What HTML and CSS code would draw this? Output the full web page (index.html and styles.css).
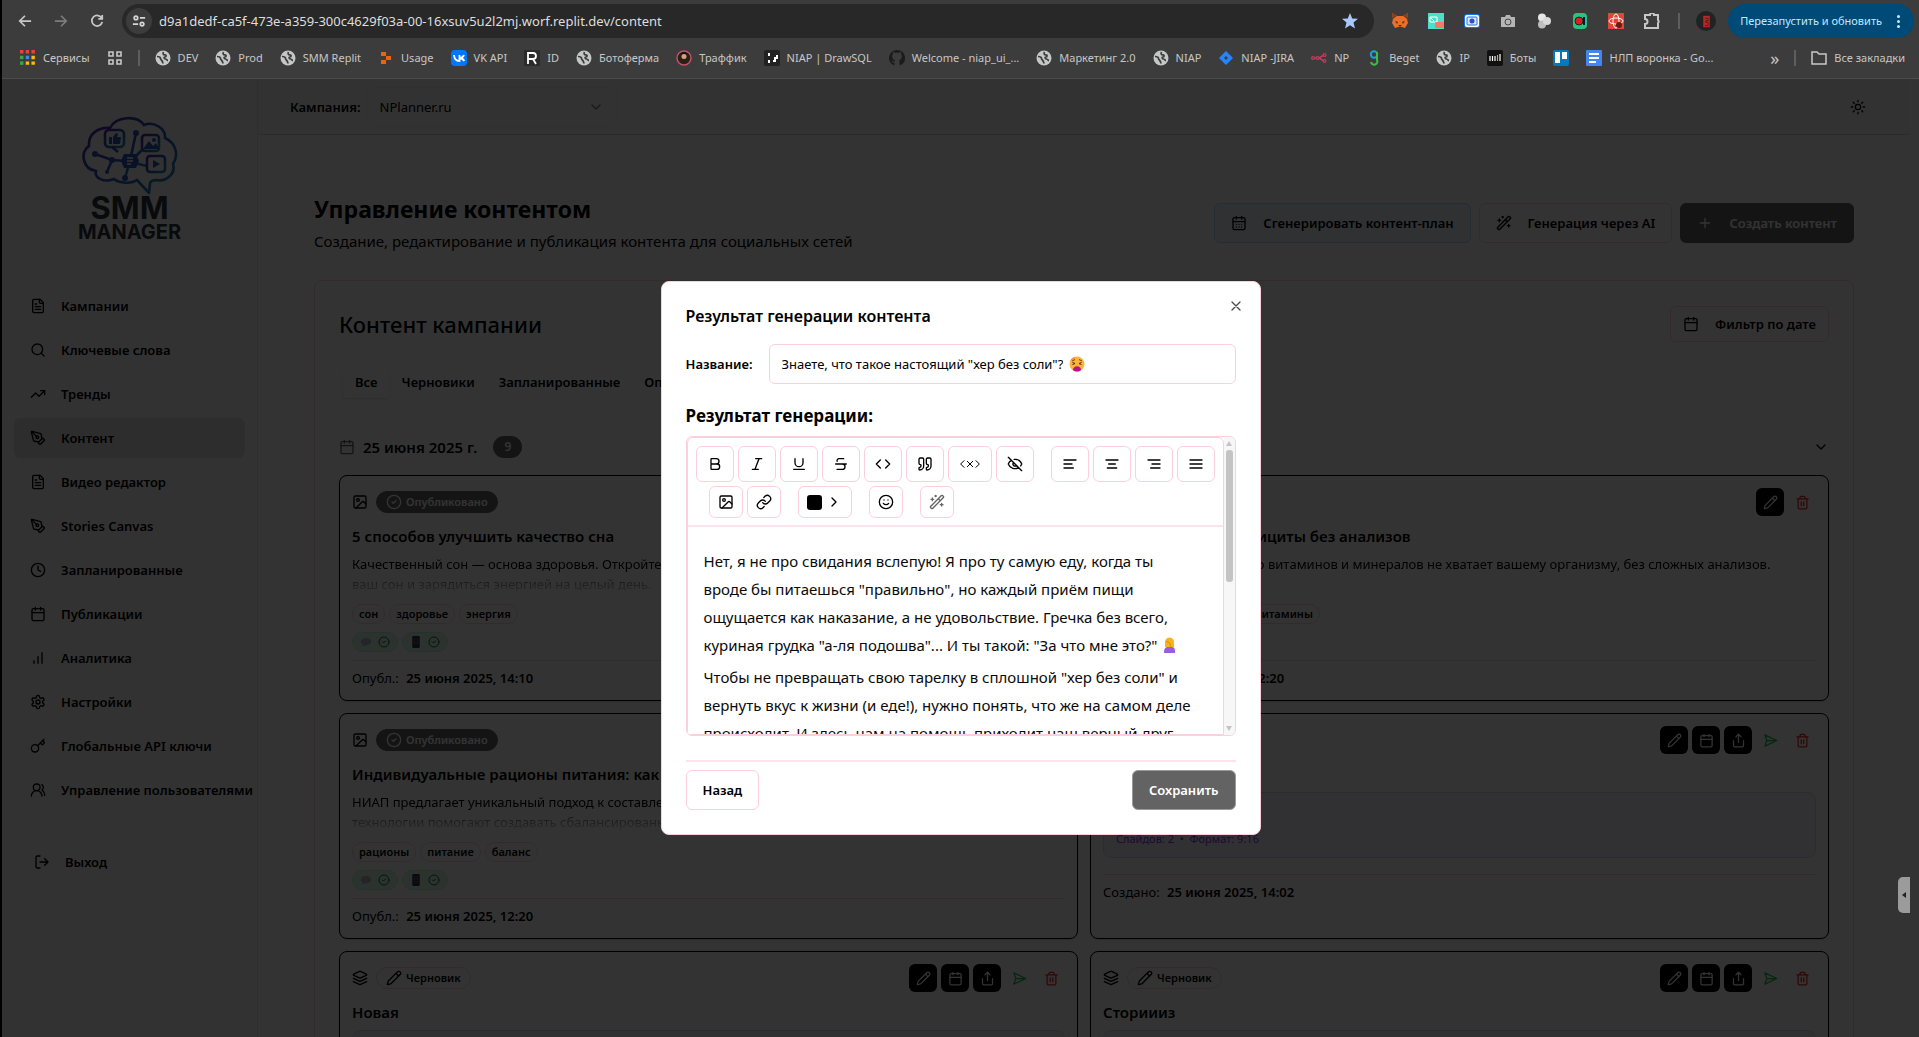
FILE: index.html
```html
<!DOCTYPE html>
<html lang="ru">
<head>
<meta charset="utf-8">
<title>Управление контентом</title>
<link rel="stylesheet" href="styles.css">
</head>
<body>
<svg class="defs" aria-hidden="true">
  <defs>
    <linearGradient id="brain" x1="0" y1="0" x2="1" y2="1">
      <stop offset="0" stop-color="#5a1fa8"/><stop offset=".5" stop-color="#2b55b8"/><stop offset="1" stop-color="#1793b5"/>
    </linearGradient>
  </defs>
  <symbol id="i-file" viewBox="0 0 24 24"><path d="M15 2H6a2 2 0 0 0-2 2v16a2 2 0 0 0 2 2h12a2 2 0 0 0 2-2V7Z"/><path d="M14 2v4a2 2 0 0 0 2 2h4M10 9H8M16 13H8M16 17H8"/></symbol>
  <symbol id="i-search" viewBox="0 0 24 24"><circle cx="11" cy="11" r="8"/><path d="m21 21-4.3-4.3"/></symbol>
  <symbol id="i-trend" viewBox="0 0 24 24"><path d="m22 7-8.500 8.500-5-5L2 17"/><path d="M16 7h6v6"/></symbol>
  <symbol id="i-pen" viewBox="0 0 24 24"><path d="M15.707 21.293a1 1 0 0 1-1.414 0l-1.586-1.586a1 1 0 0 1 0-1.414l5.586-5.586a1 1 0 0 1 1.414 0l1.586 1.586a1 1 0 0 1 0 1.414z"/><path d="m18 13-1.375-6.874a1 1 0 0 0-.746-.776L3.235 2.028a1 1 0 0 0-1.207 1.207L5.350 15.879a1 1 0 0 0 .776.746L13 18"/><path d="m2.300 2.300 7.286 7.286"/><circle cx="11" cy="11" r="2"/></symbol>
  <symbol id="i-clock" viewBox="0 0 24 24"><circle cx="12" cy="12" r="10"/><path d="M12 6v6l4 2"/></symbol>
  <symbol id="i-cal" viewBox="0 0 24 24"><path d="M8 2v4M16 2v4M3 10h18"/><rect x="3" y="4" width="18" height="18" rx="2"/></symbol>
  <symbol id="i-caldays" viewBox="0 0 24 24"><path d="M8 2v4M16 2v4M3 10h18M8 14h.01M12 14h.01M16 14h.01M8 18h.01M12 18h.01M16 18h.01"/><rect x="3" y="4" width="18" height="18" rx="2"/></symbol>
  <symbol id="i-bars" viewBox="0 0 24 24"><path d="M12 20V10M18 20V4M6 20v-4"/></symbol>
  <symbol id="i-gear" viewBox="0 0 24 24"><path d="M12.220 2h-.44a2 2 0 0 0-2 2v.18a2 2 0 0 1-1 1.730l-.43.25a2 2 0 0 1-2 0l-.15-.08a2 2 0 0 0-2.730.73l-.22.38a2 2 0 0 0 .73 2.730l.15.1a2 2 0 0 1 1 1.720v.51a2 2 0 0 1-1 1.740l-.15.09a2 2 0 0 0-.73 2.730l.22.38a2 2 0 0 0 2.730.73l.15-.08a2 2 0 0 1 2 0l.43.25a2 2 0 0 1 1 1.730V20a2 2 0 0 0 2 2h.44a2 2 0 0 0 2-2v-.18a2 2 0 0 1 1-1.730l.43-.25a2 2 0 0 1 2 0l.15.08a2 2 0 0 0 2.730-.73l.22-.39a2 2 0 0 0-.73-2.730l-.15-.08a2 2 0 0 1-1-1.740v-.5a2 2 0 0 1 1-1.740l.15-.09a2 2 0 0 0 .73-2.730l-.22-.38a2 2 0 0 0-2.730-.73l-.15.08a2 2 0 0 1-2 0l-.43-.25a2 2 0 0 1-1-1.730V4a2 2 0 0 0-2-2z"/><circle cx="12" cy="12" r="3"/></symbol>
  <symbol id="i-key" viewBox="0 0 24 24"><path d="m15.500 7.500 2.300 2.300a1 1 0 0 0 1.400 0l2.100-2.100a1 1 0 0 0 0-1.400L19 4M21 2l-9.600 9.600"/><circle cx="7.500" cy="15.500" r="5.500"/></symbol>
  <symbol id="i-users" viewBox="0 0 24 24"><path d="M18 21a8 8 0 0 0-16 0"/><circle cx="10" cy="8" r="5"/><path d="M22 20c0-3.370-2-6.500-4-8a5 5 0 0 0-.45-8.300"/></symbol>
  <symbol id="i-out" viewBox="0 0 24 24"><path d="M9 21H5a2 2 0 0 1-2-2V5a2 2 0 0 1 2-2h4M16 17l5-5-5-5M21 12H9"/></symbol>
  <symbol id="i-down" viewBox="0 0 24 24"><path d="m6 9 6 6 6-6"/></symbol>
  <symbol id="i-right" viewBox="0 0 24 24"><path d="m9 18 6-6-6-6"/></symbol>
  <symbol id="i-sun" viewBox="0 0 24 24"><circle cx="12" cy="12" r="4"/><path d="M12 2v2M12 20v2M4.930 4.930l1.410 1.410M17.660 17.660l1.410 1.410M2 12h2M20 12h2M6.340 17.660l-1.410 1.410M19.070 4.930l-1.410 1.410"/></symbol>
  <symbol id="i-wand" viewBox="0 0 24 24"><path d="m21.640 3.640-1.280-1.280a1.210 1.210 0 0 0-1.720 0L2.360 18.640a1.210 1.210 0 0 0 0 1.720l1.280 1.280a1.200 1.200 0 0 0 1.720 0L21.640 5.360a1.200 1.200 0 0 0 0-1.720M14 7l3 3M5 6v4M19 14v4M10 2v2M7 8H3M21 16h-4M11 3H9"/></symbol>
  <symbol id="i-plus" viewBox="0 0 24 24"><path d="M5 12h14M12 5v14"/></symbol>
  <symbol id="i-image" viewBox="0 0 24 24"><rect x="3" y="3" width="18" height="18" rx="2"/><circle cx="9" cy="9" r="2"/><path d="m21 15-3.086-3.086a2 2 0 0 0-2.828 0L6 21"/></symbol>
  <symbol id="i-check" viewBox="0 0 24 24"><circle cx="12" cy="12" r="10"/><path d="m9 12 2 2 4-4"/></symbol>
  <symbol id="i-pencil" viewBox="0 0 24 24"><path d="M21.174 6.812a1 1 0 0 0-3.986-3.987L3.842 16.174a2 2 0 0 0-.5.83l-1.321 4.352a.5.5 0 0 0 .623.622l4.353-1.320a2 2 0 0 0 .83-.497zM15 5l4 4"/></symbol>
  <symbol id="i-share" viewBox="0 0 24 24"><path d="M4 12v8a2 2 0 0 0 2 2h12a2 2 0 0 0 2-2v-8M16 6l-4-4-4 4M12 2v13"/></symbol>
  <symbol id="i-send" viewBox="0 0 24 24"><path d="m3 3 3 9-3 9 19-9ZM6 12h16"/></symbol>
  <symbol id="i-trash" viewBox="0 0 24 24"><path d="M3 6h18M19 6v14c0 1-1 2-2 2H7c-1 0-2-1-2-2V6M8 6V4c0-1 1-2 2-2h4c1 0 2 1 2 2v2M10 11v6M14 11v6"/></symbol>
  <symbol id="i-layers" viewBox="0 0 24 24"><path d="m12.830 2.180a2 2 0 0 0-1.660 0L2.600 6.080a1 1 0 0 0 0 1.830l8.580 3.910a2 2 0 0 0 1.660 0l8.580-3.900a1 1 0 0 0 0-1.830Z"/><path d="m22 12.500-9.170 4.160a2 2 0 0 1-1.660 0L2 12.500M22 17.500l-9.170 4.160a2 2 0 0 1-1.660 0L2 17.500"/></symbol>
  <symbol id="i-x" viewBox="0 0 24 24"><path d="M18 6 6 18M6 6l12 12"/></symbol>
  <symbol id="i-bold" viewBox="0 0 24 24"><path d="M6 12h9a4 4 0 0 1 0 8H7a1 1 0 0 1-1-1V5a1 1 0 0 1 1-1h7a4 4 0 0 1 0 8"/></symbol>
  <symbol id="i-italic" viewBox="0 0 24 24"><path d="M19 4h-9M14 20H5M15 4 9 20"/></symbol>
  <symbol id="i-under" viewBox="0 0 24 24"><path d="M6 4v6a6 6 0 0 0 12 0V4M4 20h16"/></symbol>
  <symbol id="i-strike" viewBox="0 0 24 24"><path d="M16 4H9a3 3 0 0 0-2.830 4M14 12a4 4 0 0 1 0 8H6M4 12h16"/></symbol>
  <symbol id="i-code" viewBox="0 0 24 24"><path d="m16 18 6-6-6-6M8 6l-6 6 6 6"/></symbol>
  <symbol id="i-quote" viewBox="0 0 24 24"><path d="M16 3a2 2 0 0 0-2 2v6a2 2 0 0 0 2 2 1 1 0 0 1 1 1v1a2 2 0 0 1-2 2 1 1 0 0 0-1 1v2a1 1 0 0 0 1 1 6 6 0 0 0 6-6V5a2 2 0 0 0-2-2zM5 3a2 2 0 0 0-2 2v6a2 2 0 0 0 2 2 1 1 0 0 1 1 1v1a2 2 0 0 1-2 2 1 1 0 0 0-1 1v2a1 1 0 0 0 1 1 6 6 0 0 0 6-6V5a2 2 0 0 0-2-2z"/></symbol>
  <symbol id="i-tagx" viewBox="0 0 32 24"><path d="m7 7-5 5 5 5M25 7l5 5-5 5M12 8l8 8M20 8l-8 8"/></symbol>
  <symbol id="i-eyeoff" viewBox="0 0 24 24"><path d="M10.733 5.076a10.744 10.744 0 0 1 11.205 6.575 1 1 0 0 1 0 .696 10.747 10.747 0 0 1-1.444 2.490M14.084 14.158a3 3 0 0 1-4.242-4.242M17.479 17.499a10.750 10.750 0 0 1-15.417-5.151 1 1 0 0 1 0-.696 10.750 10.750 0 0 1 4.446-5.143M2 2l20 20"/></symbol>
  <symbol id="i-al" viewBox="0 0 24 24"><path d="M15 12H3M17 18H3M21 6H3"/></symbol>
  <symbol id="i-ac" viewBox="0 0 24 24"><path d="M17 12H7M19 18H5M21 6H3"/></symbol>
  <symbol id="i-ar" viewBox="0 0 24 24"><path d="M21 12H9M21 18H7M21 6H3"/></symbol>
  <symbol id="i-aj" viewBox="0 0 24 24"><path d="M3 12h18M3 18h18M3 6h18"/></symbol>
  <symbol id="i-link" viewBox="0 0 24 24"><path d="M10 13a5 5 0 0 0 7.540.54l3-3a5 5 0 0 0-7.070-7.070l-1.720 1.710"/><path d="M14 11a5 5 0 0 0-7.540-.54l-3 3a5 5 0 0 0 7.070 7.070l1.710-1.710"/></symbol>
  <symbol id="i-smile" viewBox="0 0 24 24"><circle cx="12" cy="12" r="10"/><path d="M8 14s1.500 2 4 2 4-2 4-2M9 9h.01M15 9h.01"/></symbol>
  <symbol id="i-globe" viewBox="0 0 16 16"><circle cx="8" cy="8" r="7.500" fill="#c4c7c5" stroke="none"/><path d="M2 6.500c2 0 3.500.5 3.500 2S7.500 10 8 13.500M8.500 2c-1 2 0 3 1.500 2.800 1.500 0 1.500 2 0 2.200-1.500.2-1 1.500.5 2 1.500.3 1.500 1.500 2.500 1.500" stroke="#3c3c3c" stroke-width="1.700"/></symbol>
  <symbol id="e-bubble" viewBox="0 0 16 16"><ellipse cx="8" cy="7.500" rx="7" ry="5" fill="#b9b6c6" stroke="none"/><path d="M4 11l-1.500 3L8 12z" fill="#b9b6c6" stroke="none"/></symbol>
  <symbol id="e-phone" viewBox="0 0 16 16"><rect x="3" y="0" width="10" height="16" rx="1.500" fill="#3a3350" stroke="none"/><path d="M5 4h2M5 10h2M9 7h2" stroke="#5aa0ff"/><path d="M9 4h2M5 7h2M9 10h2" stroke="#ff7a4a"/></symbol>
</svg>

<header class="chrome">
  <div class="bar">
    <button class="tool" aria-label="Назад"><svg viewBox="0 0 16 16"><path d="M15 8H2M8 2 2 8l6 6"/></svg></button>
    <button class="tool dim" aria-label="Вперёд"><svg viewBox="0 0 16 16"><path d="M1 8h13M8 2l6 6-6 6"/></svg></button>
    <button class="tool" aria-label="Обновить"><svg viewBox="0 0 16 16"><path d="M13.500 5A6 6 0 1 0 14 9M14 1v4.500H9.500"/></svg></button>
    <div class="omni">
      <span class="site"><svg viewBox="0 0 16 16"><circle cx="4.500" cy="4.500" r="2"/><path d="M9 4.500h6M1 11.500h6"/><circle cx="11.500" cy="11.500" r="2"/></svg></span>
      <input class="url" aria-label="Адрес" value="d9a1dedf-ca5f-473e-a359-300c4629f03a-00-16xsuv5u2l2mj.worf.replit.dev/content">
      <svg class="star" viewBox="0 0 16 16"><path d="m8 0 2.200 5.400 5.800.4-4.500 3.700L13 15.400 8 12.200l-5 3.200 1.500-5.900L0 5.800l5.800-.4z"/></svg>
    </div>
    <div class="exts">
      <svg viewBox="0 0 16 16"><path d="M0 0l5 3h6l5-3-1 6 1 4-3 5-3-1H6l-3 1-3-5 1-4z" fill="#e8702a"/><path d="M5 3L1 6 0 0zM11 3l4 3 1-6z" fill="#8a3a18"/><path d="M3 8l3 1-1 2zM13 8l-3 1 1 2zM6 12h4l-2 2z" fill="#5b2a12"/></svg>
      <svg viewBox="0 0 16 16"><path d="M0 0h16v16H0z" fill="#4ce0c8"/><path d="M2 4h7v5H2zM3 5l3 3" fill="none" stroke="#fff"/><rect x="7" y="9" width="9" height="6" rx="1" fill="#f87860"/></svg>
      <svg viewBox="0 0 16 16"><rect y="1" width="16" height="14" rx="3" fill="#1a73e8"/><rect x="1" y="2" width="14" height="12" rx="2" fill="#fff"/><rect x="3" y="4" width="10" height="8" rx="1" fill="#dbe7ff" stroke="#1a73e8"/><circle cx="8" cy="8" r="2.500" fill="#3949c6"/></svg>
      <svg viewBox="0 0 16 16"><path d="M1 4h4l1-2h4l1 2h4v10H1z" fill="#b5b5b5"/><circle cx="8" cy="9" r="3" fill="#b5b5b5" stroke="#444"/></svg>
      <svg viewBox="0 0 16 16"><circle cx="6" cy="4.500" r="4" fill="#e8e8e8"/><circle cx="6" cy="11.500" r="4" fill="#bdbdbd"/><circle cx="11" cy="8" r="4" fill="#d8d8d8"/></svg>
      <svg viewBox="0 0 16 16"><rect x="1" width="14" height="16" rx="4" fill="#27c47e"/><circle cx="7" cy="8" r="4" fill="#e02020" stroke="#222"/><path d="M12 4v8" stroke="#114" stroke-width="2"/></svg>
      <svg viewBox="0 0 16 16"><path d="M0 0h16v16H0z" fill="#e0463a"/><ellipse cx="8" cy="8" rx="7" ry="3" fill="none" stroke="#fff"/><ellipse cx="8" cy="8" rx="3" ry="7" fill="none" stroke="#fff"/><circle cx="11" cy="12" r="3" fill="#6b1c12"/></svg>
      <svg viewBox="0 0 16 16"><path d="M1 2h5a2 2 0 0 1 4 0h4v5a2 2 0 0 1 0 3v5H1v-4a2 2 0 0 0 0-5z" fill="none" stroke="#c7c7c7" stroke-width="2"/></svg>
    </div>
    <span class="sep"></span>
    <span class="avatar"><svg viewBox="0 0 16 16"><path d="M4 1h8v14H4z" fill="#c0242c"/><path d="M6 4h4v3H7v2h3v4H6" stroke="#420" fill="none"/></svg></span>
    <button class="update">Перезапустить и обновить <span class="dots"></span></button>
  </div>
  <nav class="marks">
    <a href="#"><svg viewBox="0 0 14 14"><path d="M0 0h3v3H0zM5 0h3v3H5zM10 0h3v3h-3z" fill="#ea4335"/><path d="M0 5h3v3H0z" fill="#34a853"/><path d="M5 5h3v3H5z" fill="#4285f4"/><path d="M10 5h3v3h-3zM10 10h3v3h-3zM5 10h3v3H5z" fill="#fbbc04"/><path d="M0 10h3v3H0z" fill="#34a853"/></svg>Сервисы</a>
    <a href="#" aria-label="Вкладки"><svg viewBox="0 0 16 16"><path d="M2 2h4v4H2zM10 2h4v4h-4zM2 10h4v4H2zM10 10h4v4h-4z" fill="none" stroke="#c7c7c7" stroke-width="1.600"/></svg></a>
    <span class="sep"></span>
    <a href="#"><svg><use href="#i-globe"/></svg>DEV</a>
    <a href="#"><svg><use href="#i-globe"/></svg>Prod</a>
    <a href="#"><svg><use href="#i-globe"/></svg>SMM Replit</a>
    <a href="#"><svg viewBox="0 0 16 16"><path d="M3 2h5v4H3zM8 6h5v4H8zM3 10h5v4H3z" fill="#f26207"/></svg>Usage</a>
    <a href="#"><svg viewBox="0 0 16 16"><rect width="16" height="16" rx="4" fill="#07f"/><path d="M3 5c.2 4 2 6 5.500 6V5M13 5c-.5 1.500-2 3-4.500 3 2.500 0 4 1.500 4.800 3" fill="none" stroke="#fff" stroke-width="1.800"/></svg>VK API</a>
    <a href="#"><svg viewBox="0 0 16 16"><path d="M0 0h16v16H0z" fill="#2b2b2b"/><path d="M4 14V3h5a3 3 0 0 1 0 6H4M9 9l3 5" fill="none" stroke="#fff" stroke-width="1.800"/></svg>ID</a>
    <a href="#"><svg><use href="#i-globe"/></svg>Ботоферма</a>
    <a href="#"><svg viewBox="0 0 16 16"><circle cx="8" cy="8" r="7" fill="#2a2018" stroke="#c0506a" stroke-width="1.500"/><circle cx="8" cy="6.500" r="2.500" fill="#d6a27c"/><path d="M5 4c1-2 5-2 6 0z" fill="#111"/></svg>Траффик</a>
    <a href="#"><svg viewBox="0 0 16 16"><rect width="16" height="16" rx="2" fill="#222"/><path d="M5 3v3M5 10v3M9 11h2V8h2V5" stroke="#fff" stroke-width="2" fill="none"/></svg>NIAP | DrawSQL</a>
    <a href="#"><svg viewBox="0 0 16 16"><path d="M8 0a8 8 0 0 0-2.500 15.600v-3C3 13 3 11 2 10.500c2-.2 1.500 1.500 3.500 1 0-.6.300-1 .6-1.300C3 9.800 2.500 5 4 4.200L4 2c1 0 2 .8 2 .8h4S11 2 12 2v2.200c1.500 1 1 5.600-2 6 .6.600.6 1.300.6 5.400A8 8 0 0 0 8 0" fill="#1b1b1b"/></svg>Welcome - niap_ui_...</a>
    <a href="#"><svg><use href="#i-globe"/></svg>Маркетинг 2.0</a>
    <a href="#"><svg><use href="#i-globe"/></svg>NIAP</a>
    <a href="#"><svg viewBox="0 0 16 16"><path d="m8 1 7 7-7 7-7-7z" fill="#2684ff"/><path d="m8 6 2 2-2 2-2-2z" fill="#3c3c3c"/></svg>NIAP -JIRA</a>
    <a href="#"><svg viewBox="0 0 16 16"><path d="M2 8h6l5-3M8 8l5 3" fill="none" stroke="#c8385e" stroke-width="1.500"/><g fill="#3c3c3c" stroke="#c8385e" stroke-width="1.200"><circle cx="2" cy="8" r="1.400"/><circle cx="6.500" cy="8" r="1.400"/><circle cx="13.500" cy="5" r="1.400"/><circle cx="13.500" cy="11" r="1.400"/></g></svg>NP</a>
    <a href="#"><svg viewBox="0 0 16 16"><circle cx="8" cy="4.500" r="3.200" fill="none" stroke="#1ba0e0" stroke-width="2"/><path d="M11 2v8a3.200 3.200 0 1 1-6 2" fill="none" stroke="#3bbf45" stroke-width="2"/></svg>Beget</a>
    <a href="#"><svg><use href="#i-globe"/></svg>IP</a>
    <a href="#"><svg viewBox="0 0 16 16"><rect width="16" height="16" rx="2" fill="#111"/><path d="M3 6v5M5.500 6v5M8 6v5M13 4v7" stroke="#fff" stroke-width="1.200"/><path d="M10.500 5v6" stroke="#e0a030" stroke-width="1.200"/></svg>Боты</a>
    <a href="#" aria-label="Trello"><svg viewBox="0 0 16 16"><rect width="16" height="16" rx="2" fill="#0079bf"/><path d="M2 2h5v11H2zM9 2h5v7H9z" fill="#fff"/></svg></a>
    <a href="#"><svg viewBox="0 0 16 16"><rect width="16" height="16" rx="1" fill="#4285f4"/><path d="M3 4h10M3 8h10M3 12h7" stroke="#fff" stroke-width="1.800"/></svg>НЛП воронка - Go...</a>
    <span class="grow"></span>
    <button class="more" aria-label="Ещё">»</button>
    <span class="sep"></span>
    <a href="#"><svg viewBox="0 0 16 16"><path d="M1 2h5l2 2h7v10H1z" fill="none" stroke="#c7c7c7" stroke-width="1.500"/></svg>Все закладки</a>
  </nav>
</header>

<div class="app">
  <div class="page">
    <aside class="side">
      <div class="logo">
        <svg viewBox="0 0 96 78" fill="none" stroke="url(#brain)" stroke-width="2.600">
          <path d="M28 12C34 0 55-1 62 9c9-4 22 3 21 13 11 5 14 17 8 26 3 10-7 18-17 16-3 0-5 1-6 3l-1 10-12-13C48 69 35 66 32 63 22 67 12 62 14 55 0 53-2 35 7 30 6 18 16 11 28 12z"/>
          <rect x="23" y="14" width="19" height="17" rx="4"/><path d="m30 31 6 5M54 17l-5 23M60 34l-8 8M13 38l17 6 14 1M30 44l-5 12M47 48l-4 14M52 47l13 3"/>
          <rect x="60" y="19" width="17" height="16" rx="3"/><rect x="65" y="40" width="18" height="16" rx="3"/>
          <g fill="#2b55b8" stroke="none"><path d="M27 21h3v7h-3zM31 21l3-4 2 1-1 3h4l-1 7h-7zM61 33l6-8 4 5 3-3 3 6z"/><circle cx="72" cy="24" r="2"/><path d="m71 44 7 4-7 4z"/><circle cx="13" cy="38" r="3"/><circle cx="30" cy="44" r="3"/><circle cx="54" cy="17" r="3"/><circle cx="43" cy="62" r="3"/><circle cx="25" cy="56" r="2"/><path d="m42 38h12l3 7-3 7H42l-3-7z"/></g>
          <path d="M45 42h6M45 45h6M45 48h4" stroke="#fff" stroke-width="1.500"/>
        </svg>
        <span class="l1">SMM</span><span class="l2">MANAGER</span>
      </div>
      <nav class="nav">
        <a href="#"><svg class="i"><use href="#i-file"/></svg>Кампании</a>
        <a href="#"><svg class="i"><use href="#i-search"/></svg>Ключевые слова</a>
        <a href="#"><svg class="i"><use href="#i-trend"/></svg>Тренды</a>
        <a href="#" class="on"><svg class="i"><use href="#i-pen"/></svg>Контент</a>
        <a href="#"><svg class="i"><use href="#i-file"/></svg>Видео редактор</a>
        <a href="#"><svg class="i"><use href="#i-pen"/></svg>Stories Canvas</a>
        <a href="#"><svg class="i"><use href="#i-clock"/></svg>Запланированные</a>
        <a href="#"><svg class="i"><use href="#i-cal"/></svg>Публикации</a>
        <a href="#"><svg class="i"><use href="#i-bars"/></svg>Аналитика</a>
        <a href="#"><svg class="i"><use href="#i-gear"/></svg>Настройки</a>
        <a href="#"><svg class="i"><use href="#i-key"/></svg>Глобальные API ключи</a>
        <a href="#"><svg class="i"><use href="#i-users"/></svg>Управление пользователями</a>
        <a href="#" class="exit"><svg class="i"><use href="#i-out"/></svg>Выход</a>
      </nav>
    </aside>
    <div class="right">
      <div class="top">
        <span class="camp" id="camp">Кампания:</span>
        <button class="pick" aria-labelledby="camp">NPlanner.ru<svg class="i"><use href="#i-down"/></svg></button>
        <button class="ghost" aria-label="Тема"><svg class="i"><use href="#i-sun"/></svg></button>
      </div>
      <main>
        <div class="head">
          <div><h1>Управление контентом</h1><p>Создание, редактирование и публикация контента для социальных сетей</p></div>
          <div class="acts">
            <button class="btn blue"><svg class="i"><use href="#i-caldays"/></svg>Сгенерировать контент-план</button>
            <button class="btn"><svg class="i"><use href="#i-wand"/></svg>Генерация через AI</button>
            <button class="btn dark"><svg class="i"><use href="#i-plus"/></svg>Создать контент</button>
          </div>
        </div>
        <section class="panel">
          <div class="phead"><h2>Контент кампании</h2><button class="btn small"><svg class="i"><use href="#i-cal"/></svg>Фильтр по дате</button></div>
          <div class="tabs"><button class="on">Все</button><button>Черновики</button><button>Запланированные</button><button>Опубликованные</button></div>
          <div class="date"><svg class="i"><use href="#i-cal"/></svg><h3>25 июня 2025 г.</h3><span class="count">9</span><span class="grow"></span><svg class="i"><use href="#i-down"/></svg></div>
          <div class="grid">
            <article class="card">
              <div class="ctop"><svg class="i"><use href="#i-image"/></svg><span class="st pub"><svg class="i"><use href="#i-check"/></svg>Опубликовано</span></div>
              <h4>5 способов улучшить качество сна</h4>
              <p class="desc">Качественный сон — основа здоровья. Откройте простые способы улучшить<br>ваш сон и зарядиться энергией на целый день.</p>
              <div class="tags"><span>сон</span><span>здоровье</span><span>энергия</span></div>
              <div class="plats"><span><svg class="em"><use href="#e-bubble"/></svg><svg class="i"><use href="#i-check"/></svg></span><span><svg class="em"><use href="#e-phone"/></svg><svg class="i"><use href="#i-check"/></svg></span></div>
              <div class="foot">Опубл.: <b>25 июня 2025, 14:10</b></div>
            </article>
            <article class="card">
              <div class="ctop"><svg class="i"><use href="#i-image"/></svg><span class="st pub"><svg class="i"><use href="#i-check"/></svg>Опубликовано</span><span class="grow"></span><button class="sq" aria-label="Изменить"><svg class="i"><use href="#i-pencil"/></svg></button><button class="sq del" aria-label="Удалить"><svg class="i"><use href="#i-trash"/></svg></button></div>
              <h4>Как определить дефициты без анализов</h4>
              <p class="desc">Проверьте, каких именно витаминов и минералов не хватает вашему организму, без сложных анализов.</p>
              <div class="tags"><span>дефициты</span><span>здоровье</span><span>витамины</span></div>
              <div class="plats"><span><svg class="em"><use href="#e-bubble"/></svg><svg class="i"><use href="#i-check"/></svg></span></div>
              <div class="foot">Опубл.: <b>25 июня 2025, 12:20</b></div>
            </article>
            <article class="card">
              <div class="ctop"><svg class="i"><use href="#i-image"/></svg><span class="st pub"><svg class="i"><use href="#i-check"/></svg>Опубликовано</span></div>
              <h4>Индивидуальные рационы питания: как это работает</h4>
              <p class="desc">НИАП предлагает уникальный подход к составлению рационов. Наши<br>технологии помогают создавать сбалансированное питание.</p>
              <div class="tags"><span>рационы</span><span>питание</span><span>баланс</span></div>
              <div class="plats"><span><svg class="em"><use href="#e-bubble"/></svg><svg class="i"><use href="#i-check"/></svg></span><span><svg class="em"><use href="#e-phone"/></svg><svg class="i"><use href="#i-check"/></svg></span></div>
              <div class="foot">Опубл.: <b>25 июня 2025, 12:20</b></div>
            </article>
            <article class="card">
              <div class="ctop"><svg class="i"><use href="#i-layers"/></svg><span class="st"><svg class="i"><use href="#i-pencil"/></svg>Черновик</span><span class="grow"></span><button class="sq" aria-label="Изменить"><svg class="i"><use href="#i-pencil"/></svg></button><button class="sq" aria-label="Запланировать"><svg class="i"><use href="#i-cal"/></svg></button><button class="sq" aria-label="Поделиться"><svg class="i"><use href="#i-share"/></svg></button><button class="sq send" aria-label="Отправить"><svg class="i"><use href="#i-send"/></svg></button><button class="sq del" aria-label="Удалить"><svg class="i"><use href="#i-trash"/></svg></button></div>
              <h4>Новая</h4>
              <div class="story">Слайдов: 2 &nbsp;•&nbsp; Формат: 9:16</div>
              <div class="foot low">Создано: <b>25 июня 2025, 14:02</b></div>
            </article>
            <article class="card">
              <div class="ctop"><svg class="i"><use href="#i-layers"/></svg><span class="st"><svg class="i"><use href="#i-pencil"/></svg>Черновик</span><span class="grow"></span><button class="sq" aria-label="Изменить"><svg class="i"><use href="#i-pencil"/></svg></button><button class="sq" aria-label="Запланировать"><svg class="i"><use href="#i-cal"/></svg></button><button class="sq" aria-label="Поделиться"><svg class="i"><use href="#i-share"/></svg></button><button class="sq send" aria-label="Отправить"><svg class="i"><use href="#i-send"/></svg></button><button class="sq del" aria-label="Удалить"><svg class="i"><use href="#i-trash"/></svg></button></div>
              <h4>Новая</h4>
              <div class="story"></div>
            </article>
            <article class="card">
              <div class="ctop"><svg class="i"><use href="#i-layers"/></svg><span class="st"><svg class="i"><use href="#i-pencil"/></svg>Черновик</span><span class="grow"></span><button class="sq" aria-label="Изменить"><svg class="i"><use href="#i-pencil"/></svg></button><button class="sq" aria-label="Запланировать"><svg class="i"><use href="#i-cal"/></svg></button><button class="sq" aria-label="Поделиться"><svg class="i"><use href="#i-share"/></svg></button><button class="sq send" aria-label="Отправить"><svg class="i"><use href="#i-send"/></svg></button><button class="sq del" aria-label="Удалить"><svg class="i"><use href="#i-trash"/></svg></button></div>
              <h4>Сториииз</h4>
              <div class="story"></div>
            </article>
          </div>
        </section>
      </main>
    </div>
  </div>

  <div class="shade">
    <div class="dialog" role="dialog" aria-labelledby="dt">
      <button class="close" aria-label="Закрыть"><svg class="i"><use href="#i-x"/></svg></button>
      <h2 id="dt">Результат генерации контента</h2>
      <div class="field">
        <label for="name">Название:</label>
        <div class="box"><input id="name" value='Знаете, что такое настоящий "хер без соли"?'>
          <svg class="emo" viewBox="0 0 16 16"><circle cx="8" cy="8" r="7.500" fill="#fbb43a"/><path d="M1 5a7.500 7.500 0 0 1 5-4.200C6 3 3 4 1 5z" fill="#f08a3a"/><path d="M3 5l3-1.500M13 5l-3-1.500" stroke="#8a3b1c"/><path d="M3.500 6.500l2.500 1-2.500 1M12.500 6.500l-2.500 1 2.500 1" stroke="#4a2236" fill="none"/><path d="M4 14c0-5 8-5 8 0-2 2-6 2-8 0z" fill="#c01090"/></svg></div>
      </div>
      <h3>Результат генерации:</h3>
      <div class="editor">
        <div class="inner">
          <div class="tb">
            <div class="row">
              <button aria-label="Жирный"><svg class="i"><use href="#i-bold"/></svg></button><button aria-label="Курсив"><svg class="i"><use href="#i-italic"/></svg></button><button aria-label="Подчёркнутый"><svg class="i"><use href="#i-under"/></svg></button><button aria-label="Зачёркнутый"><svg class="i"><use href="#i-strike"/></svg></button><button aria-label="Код"><svg class="i"><use href="#i-code"/></svg></button><button aria-label="Цитата"><svg class="i"><use href="#i-quote"/></svg></button><button class="wide" aria-label="Очистить"><svg class="i w"><use href="#i-tagx"/></svg></button><button aria-label="Скрыть"><svg class="i"><use href="#i-eyeoff"/></svg></button>
              <button class="gap" aria-label="Влево"><svg class="i"><use href="#i-al"/></svg></button><button aria-label="По центру"><svg class="i"><use href="#i-ac"/></svg></button><button aria-label="Вправо"><svg class="i"><use href="#i-ar"/></svg></button><button aria-label="По ширине"><svg class="i"><use href="#i-aj"/></svg></button>
            </div>
            <div class="row two">
              <button class="gap" aria-label="Картинка"><svg class="i"><use href="#i-image"/></svg></button><button aria-label="Ссылка"><svg class="i"><use href="#i-link"/></svg></button><button class="gap color" aria-label="Цвет"><span></span><svg class="i"><use href="#i-right"/></svg></button><button class="gap" aria-label="Смайлик"><svg class="i"><use href="#i-smile"/></svg></button><button class="gap pale" aria-label="Улучшить"><svg class="i"><use href="#i-wand"/></svg></button>
            </div>
          </div>
          <div class="doc">
            <p>Нет, я не про свидания вслепую! Я про ту самую еду, когда ты<br>вроде бы питаешься "правильно", но каждый приём пищи<br>ощущается как наказание, а не удовольствие. Гречка без всего,<br>куриная грудка "а-ля подошва"... И ты такой: "За что мне это?" <svg class="emo" viewBox="0 0 16 16"><path d="M4 5c0-6 9-6 9 0v5H4z" fill="#fbb31c"/><path d="M3 16c0-4 1-6 4-6h4c3 0 3 3 3 6z" fill="#9b5de0"/><path d="M5 5c2-1 4 0 5 5" stroke="#d88a10" fill="none"/></svg></p>
            <p>Чтобы не превращать свою тарелку в сплошной "хер без соли" и<br>вернуть вкус к жизни (и еде!), нужно понять, что же на самом деле<br>происходит. И здесь нам на помощь приходит наш верный друг —</p>
          </div>
        </div>
        <div class="scroll"><span class="up"></span><span class="thumb"></span><span class="dn"></span></div>
      </div>
      <div class="dfoot"><button class="btn2">Назад</button><button class="btn2 save">Сохранить</button></div>
    </div>
  </div>
  <button class="handle" aria-label="Панель"></button>
</div>
</body>
</html>
```
FILE: styles.css
```css
* { box-sizing: border-box; }
body {
  margin: 0; height: 100vh; overflow: hidden; display: flex; flex-direction: column;
  background: #fff; color: #000; font: 14px/20px "Noto Sans", "Open Sans", sans-serif;
  border-left: 2px solid #000;
}
h1, h2, h3, h4, p { margin: 0; }
button, input { font: inherit; color: inherit; border: 0; background: none; padding: 0; margin: 0; }
a { color: inherit; text-decoration: none; }
.defs { position: absolute; width: 0; height: 0; }
.i { width: 16px; height: 16px; flex: none; fill: none; stroke: currentColor; stroke-width: 2; stroke-linecap: round; stroke-linejoin: round; }
.grow { flex: 1; }

/* browser frame */
.chrome { flex: none; background: #3c3c3c; border-bottom: 1px solid #4c4c4c; color: #c7c7c7; font-size: 12px; padding-top: 4px; }
.bar { display: flex; align-items: center; height: 34px; padding: 0 5px 0 16px; }
.tool { width: 36px; height: 16px; text-align: left; }
.tool svg { width: 14px; height: 14px; fill: none; stroke: #c7c7c7; stroke-width: 2; display: block; }
.tool.dim svg { stroke: #7c7c7c; }
.tool:nth-child(3) { width: 32px; }
.omni { flex: 1; height: 34px; border-radius: 17px; background: #282828; display: flex; align-items: center; padding: 0 16px 0 4px; }
.site { width: 26px; height: 26px; border-radius: 50%; background: #3c3c3c; display: grid; place-items: center; margin-right: 7px; }
.site svg { width: 14px; fill: none; stroke: #d5d5d5; stroke-width: 2; }
.url { flex: 1; font-size: 13px; color: #dedede; outline: none; }
.star { width: 16px; fill: #a8c7fa; }
.exts { display: flex; gap: 20px; margin: 0 18px; }
.exts svg { width: 16px; height: 16px; }
.bar .sep, .marks .sep { width: 2px; height: 16px; background: #5e5e5e; }
.avatar { width: 20px; height: 20px; border-radius: 50%; background: #222; display: grid; place-items: center; margin: 0 12px 0 16px; }
.avatar svg { width: 13px; }
.update { height: 34px; border-radius: 17px; background: #004a77; color: #c2e7ff; padding: 0 14px 0 12px; display: flex; align-items: center; gap: 15px; font-size: 11px; }
.dots { width: 3px; height: 3px; border-radius: 50%; background: #c2e7ff; box-shadow: 0 -5px #c2e7ff, 0 5px #c2e7ff; }
.marks { display: flex; align-items: center; height: 40px; padding: 0 14px 0 18px; gap: 17px; font-size: 11px; white-space: nowrap; }
.marks a { display: flex; align-items: center; gap: 7px; }
.marks svg { width: 16px; height: 16px; flex: none; fill: none; }
.marks .sep { margin: 0 -2px; }
.more { font-size: 18px; color: #c7c7c7; }

/* application */
.app { flex: 1; min-height: 0; position: relative; }
.page { height: 100%; overflow: hidden; display: flex; margin-right: 9px; background: #fff; }
.side { flex: none; width: 256px; border-right: 1px solid #e5e5e5; background: #fafafa; padding: 0 12px; }
.logo { height: 207px; padding-top: 37px; display: flex; flex-direction: column; align-items: center; color: #30363f; font-weight: 700; }
.logo svg { width: 96px; height: 78px; }
.logo .l1 { font: 700 31px/28px Inter, sans-serif; }
.logo .l2 { font: 700 20px/20px Inter, sans-serif; }
.nav { display: flex; flex-direction: column; gap: 4px; }
.nav a { height: 40px; display: flex; align-items: center; gap: 15px; padding-left: 16px; border-radius: 6px; font-weight: 600; font-size: 13px; white-space: nowrap; }
.nav .on { background: #e2e2e2; }
.nav .exit { margin-top: 28px; padding-left: 20px; }
.right { flex: 1; min-width: 0; }
.top { height: 56px; border-bottom: 1px solid #d8d8d8; background: #fafafa; display: flex; align-items: center; padding: 0 44px 0 32px; }
.camp { font-weight: 600; font-size: 13px; margin-right: 6px; }
.pick { width: 250px; height: 40px; border: 1px solid #fce7eb; border-radius: 6px; padding: 0 12px; display: flex; align-items: center; justify-content: space-between; font-size: 13px; }
.pick .i { opacity: .5; }
.ghost { margin-left: auto; height: 16px; }
main { padding: 59px 56px 0; }
.head { display: flex; justify-content: space-between; align-items: center; margin-bottom: 28px; height: 58px; }
h1 { font-size: 23px; line-height: 32px; font-weight: 700; }
.head p { font-size: 15px; line-height: 24px; margin-top: 4px; }
.acts { display: flex; gap: 8px; }
.btn { height: 40px; border: 1px solid #fbd5dd; border-radius: 6px; padding: 0 16px; display: flex; align-items: center; gap: 16px; font-weight: 600; font-size: 13px; background: #fff; }
.btn.blue { background: #eff6ff; border-color: #bfdbfe; }
.btn.dark { background: #666; border-color: #666; color: #fff; }
.btn.small { height: 36px; padding: 0 12px; }
.panel { border: 1px solid #fbd5dd; border-radius: 8px; padding: 24px 24px 40px; }
.phead { display: flex; justify-content: space-between; align-items: center; height: 37px; }
.phead h2 { font-size: 22px; font-weight: 500; line-height: 32px; }
.tabs { display: flex; margin: 24px 0 0 4px; }
.tabs button { padding: 6px 12px; font-weight: 600; font-size: 13px; border-radius: 4px; }
.tabs .on { box-shadow: 0 1px 2px #0002; }
.date { display: flex; align-items: center; gap: 8px; margin: 38px 0 17px; height: 22px; }
.date > .i:first-child { opacity: .6; }
.date h3 { font-size: 15px; font-weight: 600; }
.count { background: #666; color: #fff; border-radius: 11px; font-size: 12px; line-height: 22px; padding: 0 11px; margin-left: 8px; font-weight: 600; }
.grid { display: grid; grid-template-columns: 1fr 1fr; gap: 12px; grid-auto-rows: 226px; }
.card { border: 1px solid #000; border-radius: 8px; padding: 12px; box-shadow: 0 1px 2px #0002; }
.ctop { height: 28px; display: flex; align-items: center; gap: 4px; }
.st { display: flex; align-items: center; gap: 4px; height: 22px; border-radius: 11px; border: 1px solid #fbd5dd; padding: 0 9px; font-size: 11px; font-weight: 600; margin-left: 4px; }
.st.pub { background: #666; border-color: #666; color: #fff; }
.sq { width: 28px; height: 28px; border-radius: 6px; background: #000; color: #fff; display: grid; place-items: center; }
.sq .i { width: 15px; height: 15px; }
.sq.del { background: none; color: #f02020; }
.sq.send { background: none; color: #16c04a; }
.card h4 { font-size: 15px; font-weight: 600; line-height: 24px; margin-top: 8px; white-space: nowrap; overflow: hidden; }
.desc { font-size: 13px; line-height: 20px; height: 40px; margin-top: 6px; white-space: nowrap; overflow: hidden; background: linear-gradient(#000 45%, #666 60%, #ddd 95%); -webkit-background-clip: text; background-clip: text; color: transparent; }
.tags { display: flex; gap: 4px; margin-top: 10px; }
.tags span { height: 20px; border: 1px solid #fbd5dd; border-radius: 10px; padding: 0 6px; font-size: 11px; line-height: 18px; font-weight: 600; }
.plats { display: flex; gap: 4px; margin-top: 8px; height: 20px; }
.plats span { width: 46px; border-radius: 10px; background: #dcfce7; border: 1px solid #bbf7d0; color: #166534; display: flex; align-items: center; justify-content: center; gap: 6px; }
.plats .i, .em { width: 12px; height: 12px; }
.foot { border-top: 1px solid #fbd5dd; margin-top: 8px; padding-top: 7px; font-size: 13px; }
.foot b { font-weight: 600; margin-left: 4px; }
.story { height: 66px; margin-top: 6px; border: 1px solid #ddd6fe; border-radius: 8px; background: #f5f3ff; color: #9333ea; font-size: 11px; line-height: 16px; padding: 38px 12px 0; }
.low { margin-top: 16px; }

/* dialog */
.shade { position: absolute; inset: 0; background: rgba(0, 0, 0, .8); display: grid; place-items: center; }
.dialog { position: relative; width: 600px; background: #fff; border: 1px solid #fbd0da; border-radius: 8px; padding: 24px; }
.close { position: absolute; top: 16px; right: 16px; height: 16px; opacity: .7; }
.dialog h2 { font-size: 16px; line-height: 20px; font-weight: 600; }
.field { display: flex; align-items: center; gap: 16px; margin-top: 18px; }
.field label { font-weight: 600; font-size: 13px; }
.box { flex: 1; height: 40px; border: 1px solid #fbd0da; border-radius: 6px; display: flex; align-items: center; padding: 0 12px; gap: 6px; }
.box input { field-sizing: content; outline: none; font-size: 13px; }
.emo { width: 16px; height: 16px; vertical-align: -2px; }
.dialog h3 { font-size: 17px; line-height: 28px; font-weight: 700; margin-top: 18px; }
.editor { height: 300px; margin-top: 6px; border: 1px solid #fbd0da; border-radius: 6px; display: flex; overflow: hidden; }
.inner { flex: 1; border: 1px solid #fbd0da; border-radius: 6px 6px 0 0; overflow: hidden; }
.tb { padding: 8px 8px 7px; border-bottom: 2px solid #fce4ea; display: flex; flex-direction: column; gap: 4px; }
.row { display: flex; gap: 4px; }
.tb button { width: 38px; height: 36px; border: 1px solid #fbd0da; border-radius: 6px; display: flex; align-items: center; justify-content: center; gap: 8px; }
.tb .wide { width: 44px; }
.tb .w { width: 22px; stroke-width: 1.5; }
.row .gap { margin-left: 13px; }
.tb .two button { width: 34px; height: 32px; }
.tb .two .color { width: 54px; gap: 4px; }
.color span { width: 15px; height: 15px; border-radius: 3px; background: #000; }
.tb .pale { color: #666; }
.doc { padding: 20px 16px; font-size: 15px; line-height: 28px; white-space: nowrap; color: #0a0a0a; }
.doc p + p { margin-top: 4px; }
.scroll { width: 11px; background: #f7f7f7; display: flex; flex-direction: column; align-items: center; padding: 4px 0; }
.scroll .up, .scroll .dn { border: 3px solid transparent; border-top: 0; border-bottom: 5px solid #c4c4c4; }
.scroll .dn { border-bottom: 0; border-top: 5px solid #c4c4c4; margin-top: auto; }
.thumb { width: 7px; height: 132px; border-radius: 3px; background: #c4c4c4; margin-top: 4px; }
.dfoot { display: flex; justify-content: space-between; border-top: 2px solid #fce4ea; margin-top: 24px; padding-top: 8px; }
.btn2 { height: 40px; border: 1px solid #fbd0da; border-radius: 6px; padding: 0 16px; font-weight: 600; font-size: 13px; }
.btn2.save { background: #636363; border-color: #9a9a9a; color: #fff; }
.handle { position: absolute; right: 9px; bottom: 124px; width: 12px; height: 36px; border-radius: 5px 0 0 5px; background: #9b9b9b; display: grid; place-items: center; }
.handle::before { content: ""; border: 3px solid transparent; border-right: 4px solid #222; border-left: 0; }
```
